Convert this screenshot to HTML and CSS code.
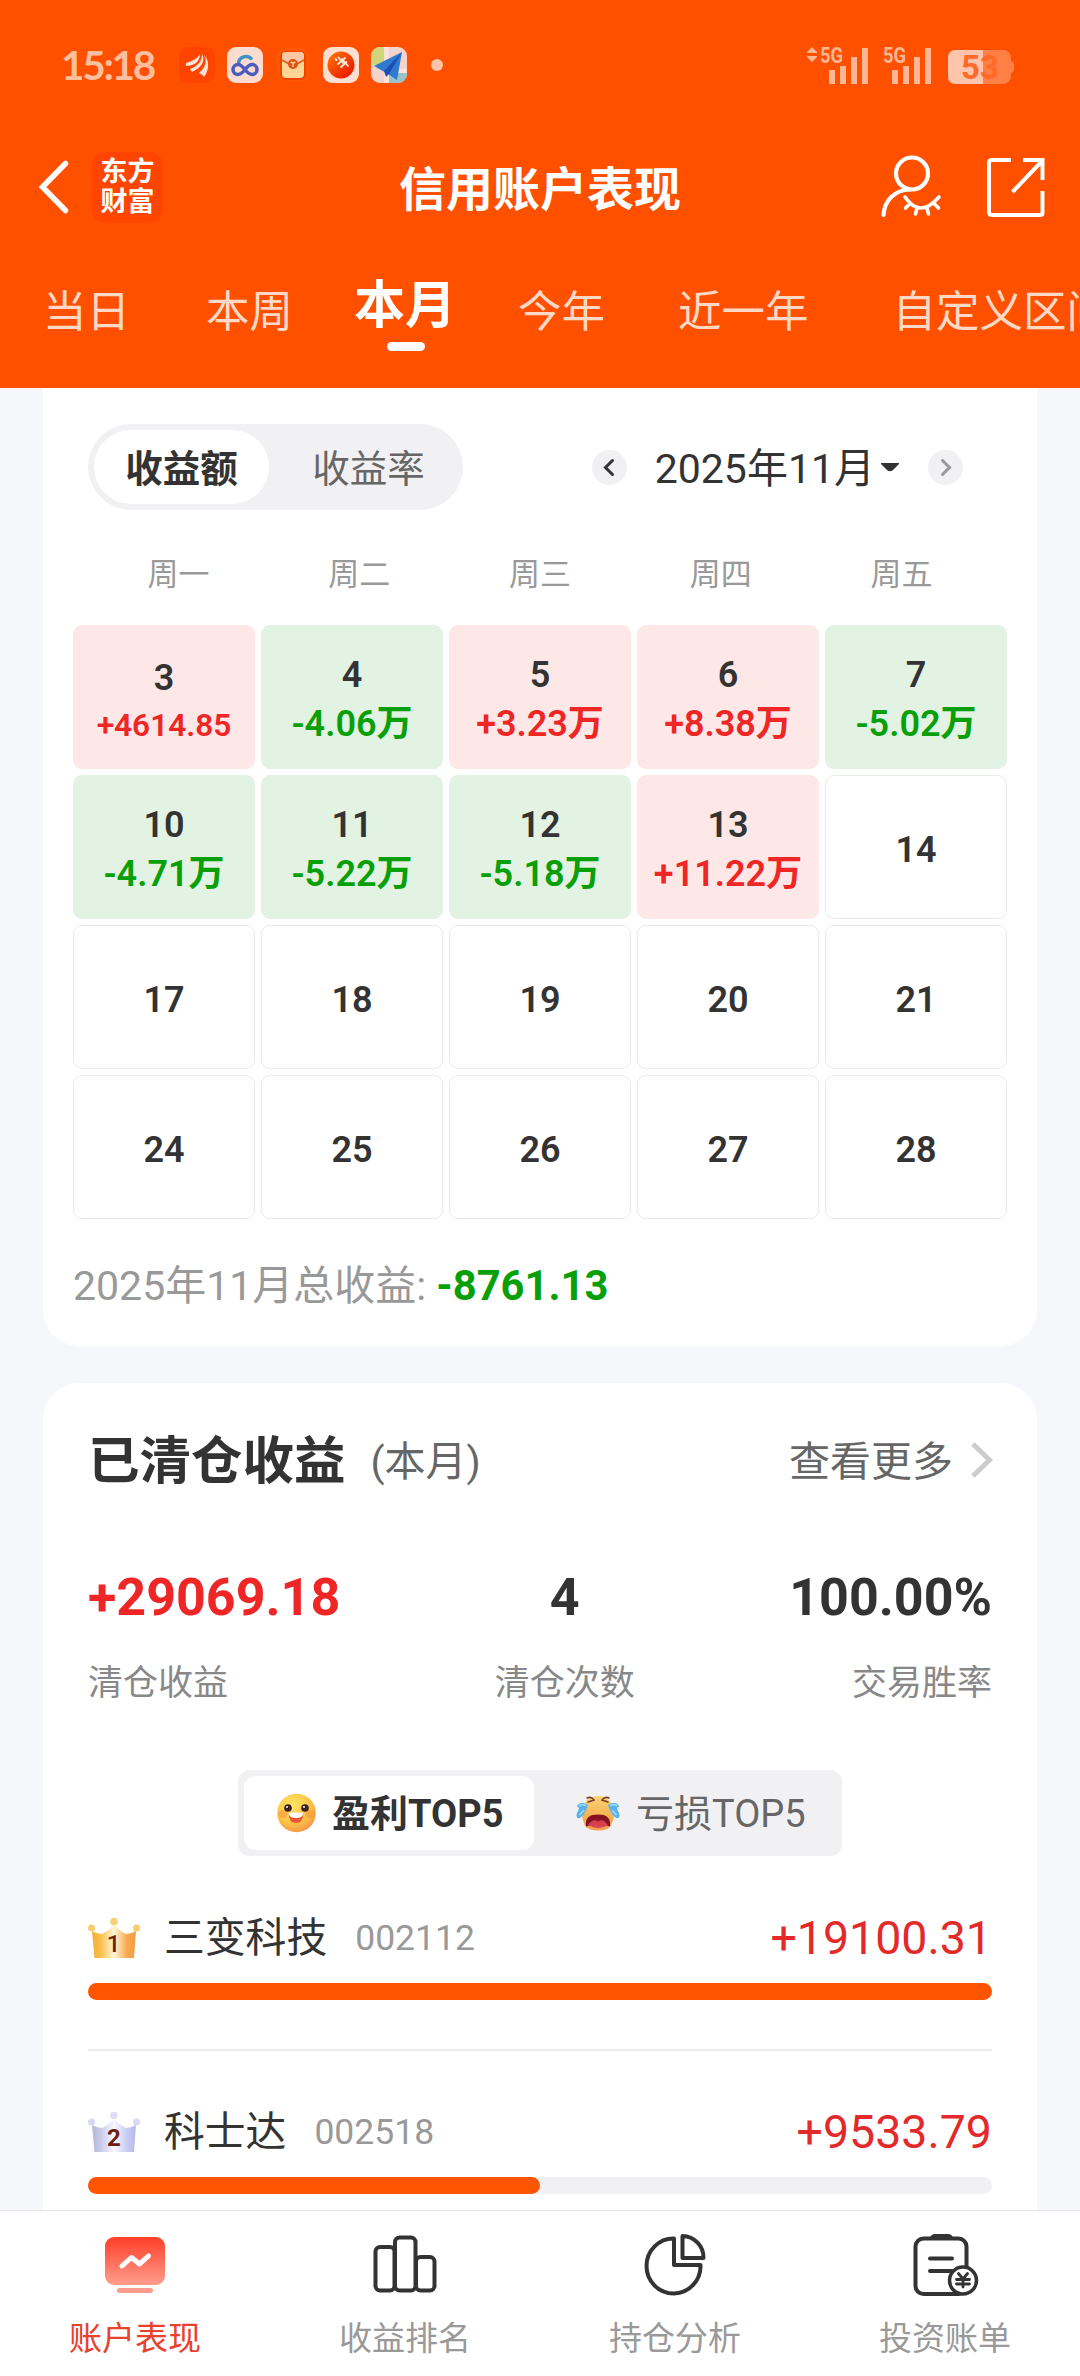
FILE: index.html
```html
<!DOCTYPE html>
<html lang="zh-CN">
<head>
  <meta charset="UTF-8">
  <meta name="viewport" content="width=device-width, initial-scale=1.0">
  <title>信用账户表现</title>
  <link rel="stylesheet" href="styles.css">
</head>
<body>
  <header class="header">
    <!-- 状态栏 -->
    <div class="status">
      <span class="status-time">15:18</span>
      <div class="status-apps">
        <svg width="36" height="36" viewBox="0 0 36 36">
          <rect width="36" height="36" rx="9" fill="#ff4400"/>
          <path d="M7 16C13 14 18 12 21 7C21 14 16 19 7 19ZM11 22C19 19 23 14 23 7C27 14 22 21 13 25ZM20 26C27 20 28 14 25 8C31 13 30 24 25 30C24 28 22 27 20 26Z" fill="#ffe3d6"/>
        </svg>
        <svg width="36" height="36" viewBox="0 0 36 36">
          <rect width="36" height="36" rx="9" fill="#fbdccf"/>
          <path d="M11.500 17A7.500 7.500 0 0 1 25 12.500" fill="none" stroke="#3f93c8" stroke-width="3.500"/>
          <path d="M25 17.500C19 17.500 17 27.500 11 27.500A5 5 0 0 1 11 17.500C14 17.500 16 20 18 22.500S22 27.500 25 27.500A5 5 0 0 0 25 17.500" fill="none" stroke="#4b5dbd" stroke-width="3.500"/>
        </svg>
        <svg width="36" height="36" viewBox="0 0 36 36">
          <rect x="1" y="1" width="34" height="34" rx="9" fill="#ff5600"/>
          <rect x="5" y="4" width="26" height="29" rx="6" fill="#f04300"/>
          <rect x="7" y="5" width="22" height="26" rx="4" fill="#ffd596"/>
          <path d="M7 9V13L14 17H22L29 13V9Q29 5 25 5H11Q7 5 7 9Z" fill="#fbc7a2"/>
          <path d="M7 13L14 17M22 17L29 13" stroke="#df5a1c" stroke-width="1.500"/>
          <circle cx="18" cy="17" r="5" fill="#df5018"/>
          <path d="M15.500 15.500H20.500M18 15.500V20" stroke="#ffd09a" stroke-width="1.500"/>
        </svg>
        <svg width="36" height="36" viewBox="0 0 36 36">
          <defs><linearGradient id="ball" x1="0" y1="0" x2="1" y2="1"><stop offset="0" stop-color="#ff7a00"/><stop offset="1" stop-color="#e90a00"/></linearGradient></defs>
          <rect width="36" height="36" rx="9" fill="#ffdfd2"/>
          <circle cx="18" cy="18" r="13.500" fill="url(#ball)"/>
          <path d="M12.500 12L13.500 13M15.500 10.500L20 16M15 17L22 11M18 20L23.500 15M19 12L25 19" stroke="#ffe8d8" stroke-width="1.800" stroke-linecap="round"/>
        </svg>
        <svg width="36" height="36" viewBox="0 0 36 36">
          <defs><clipPath id="mapclip"><rect width="36" height="36" rx="9"/></clipPath></defs>
          <g clip-path="url(#mapclip)">
            <rect width="36" height="36" fill="#f3d3cd"/>
            <rect width="13" height="18" fill="#cfd578"/>
            <rect x="18" y="26" width="18" height="10" fill="#97c3cd"/>
            <path d="M13 0H18V36H13ZM13 22H36V26H13Z" fill="#fbe3da"/>
          </g>
          <path d="M3 19L31 5L26 33L17 27Z" fill="#2f7bd0"/>
          <path d="M31 5L13 24L15 30L18 27Z" fill="#1c4fb4"/>
        </svg>
        <i class="status-dot"></i>
      </div>
      <svg class="status-signal" width="210" height="40" viewBox="0 0 210 40">
        <g fill="#ffb697">
          <path d="M7 2L12 7V8H2V7ZM2 11H12V12L7 17L2 12Z"/>
          <text x="15" y="17.500" class="net" textLength="23" lengthAdjust="spacingAndGlyphs">5G</text>
          <path d="M24 25h6v14h-6zM35 21h6v18h-6zM46 12h6v27h-6zM57 3h6v36h-6z"/>
          <text x="78" y="17.500" class="net" textLength="23" lengthAdjust="spacingAndGlyphs">5G</text>
          <path d="M87 25h6v14h-6zM98 21h6v18h-6zM109 12h6v27h-6zM120 3h6v36h-6z"/>
        </g>
        <rect x="143" y="5" width="63" height="34" rx="8" fill="#ff8045"/>
        <path d="M206 16Q209 17 209 19V25Q209 27 206 28Z" fill="#ff8045"/>
        <path d="M178 5V39H151Q143 39 143 31V13Q143 5 151 5Z" fill="#ffc4ab"/>
        <text x="156" y="33.500" class="battery">53</text>
      </svg>
    </div>

    <!-- 导航栏 -->
    <div class="nav">
      <svg class="nav-back" width="30" height="54" viewBox="0 0 30 54">
        <path d="M26.500 3.500L3.500 27L26.500 50.500" fill="none" stroke="#fff" stroke-width="5.500" stroke-linecap="round"/>
      </svg>
      <div class="logo"><span>东方</span><span>财富</span></div>
      <h1 class="nav-title">信用账户表现</h1>
      <svg class="nav-user" width="64" height="66" viewBox="0 0 64 66" fill="none" stroke="#fff" stroke-width="4.200" stroke-linecap="round">
        <circle cx="33" cy="19.500" r="16"/>
        <path d="M4.500 61C5.500 46 16 36 31 35.500"/>
        <path d="M26 43Q41 65 60 43M30.500 50L26.500 54M38 54L36.500 60M48 54L49.500 60M55.500 50L59.500 54" stroke-width="3.600"/>
      </svg>
      <svg class="nav-share" width="58" height="60" viewBox="0 0 58 60" fill="none" stroke="#fff" stroke-width="4">
        <path d="M24 3H5Q2 3 2 6V55Q2 58 5 58H53Q55.500 58 55.500 56V34M36 3H55.500V23M55 4L25.500 35"/>
      </svg>
    </div>

    <nav class="tabs">
      <a class="tab">当日</a>
      <a class="tab">本周</a>
      <a class="tab active">本月</a>
      <a class="tab">今年</a>
      <a class="tab">近一年</a>
      <a class="tab">自定义区间</a>
    </nav>
  </header>

  <main class="main">
    <!-- 收益日历 -->
    <section class="card calendar">
      <div class="toolbar">
        <div class="segment">
          <span class="segment-item active">收益额</span>
          <span class="segment-item">收益率</span>
        </div>
        <div class="month">
          <svg width="35" height="35" viewBox="0 0 35 35">
            <circle cx="17.500" cy="17.500" r="17.500" fill="#f1f1f3"/>
            <path d="M20.500 10.500L13.500 17.500L20.500 24.500" fill="none" stroke="#333" stroke-width="3" stroke-linecap="round"/>
          </svg>
          <span class="month-text">2025年11月</span>
          <svg class="caret" width="20" height="10" viewBox="0 0 20 10"><path d="M1 1H19V2L12.500 8.500Q10 10 7.500 8.500L1 2Z" fill="#333"/></svg>
          <svg width="35" height="35" viewBox="0 0 35 35">
            <circle cx="17.500" cy="17.500" r="17.500" fill="#f1f1f3"/>
            <path d="M14.500 10.500L21.500 17.500L14.500 24.500" fill="none" stroke="#999" stroke-width="3" stroke-linecap="round"/>
          </svg>
        </div>
      </div>
      <div class="week">
        <span>周一</span><span>周二</span><span>周三</span><span>周四</span><span>周五</span>
      </div>
      <div class="days">
        <div class="day up small"><b>3</b><em>+4614.85</em></div>
        <div class="day down"><b>4</b><em>-4.06万</em></div>
        <div class="day up"><b>5</b><em>+3.23万</em></div>
        <div class="day up"><b>6</b><em>+8.38万</em></div>
        <div class="day down"><b>7</b><em>-5.02万</em></div>
        <div class="day down"><b>10</b><em>-4.71万</em></div>
        <div class="day down"><b>11</b><em>-5.22万</em></div>
        <div class="day down"><b>12</b><em>-5.18万</em></div>
        <div class="day up"><b>13</b><em>+11.22万</em></div>
        <div class="day"><b>14</b></div>
        <div class="day"><b>17</b></div>
        <div class="day"><b>18</b></div>
        <div class="day"><b>19</b></div>
        <div class="day"><b>20</b></div>
        <div class="day"><b>21</b></div>
        <div class="day"><b>24</b></div>
        <div class="day"><b>25</b></div>
        <div class="day"><b>26</b></div>
        <div class="day"><b>27</b></div>
        <div class="day"><b>28</b></div>
      </div>
      <p class="total">2025年11月总收益: <strong>-8761.13</strong></p>
    </section>

    <!-- 已清仓收益 -->
    <section class="card closed">
      <div class="closed-head">
        <h2>已清仓收益</h2>
        <span class="period">(本月)</span>
        <a class="more">查看更多</a>
        <svg class="more-arrow" width="22" height="36" viewBox="0 0 22 36"><path d="M2 2L18.500 18L2 34" fill="none" stroke="#ccc" stroke-width="5"/></svg>
      </div>
      <div class="stats">
        <div class="stat"><b class="red">+29069.18</b><span>清仓收益</span></div>
        <div class="stat center"><b>4</b><span>清仓次数</span></div>
        <div class="stat right"><b>100.00%</b><span>交易胜率</span></div>
      </div>
      <div class="switch">
        <div class="switch-item active">
          <svg width="39" height="40" viewBox="0 0 39 40">
            <defs>
              <radialGradient id="smile" cx=".4" cy=".3" r=".75"><stop offset="0" stop-color="#ffe565"/><stop offset=".6" stop-color="#fcc544"/><stop offset="1" stop-color="#f3924c"/></radialGradient>
            </defs>
            <circle cx="19.500" cy="20" r="19.300" fill="url(#smile)"/>
            <ellipse cx="6" cy="21" rx="5" ry="4" fill="#f7973f" opacity=".6"/>
            <ellipse cx="33" cy="21" rx="5" ry="4" fill="#f7973f" opacity=".6"/>
            <circle cx="11" cy="15" r="3.800" fill="#3a1f24"/><circle cx="28" cy="15" r="3.800" fill="#3a1f24"/>
            <circle cx="10" cy="14" r="1" fill="#fff"/><circle cx="27" cy="14" r="1" fill="#fff"/>
            <path d="M11.500 20Q19 19 26.500 20Q26 30 19 30Q12 30 11.500 20Z" fill="#ee5636"/>
            <path d="M11.500 20Q19 18.500 26.500 20Q26 25 19 25Q12 25 11.500 20Z" fill="#fff"/>
          </svg>
          <span>盈利TOP5</span>
        </div>
        <div class="switch-item">
          <svg width="44" height="36" viewBox="0 0 44 36">
            <defs>
              <linearGradient id="cry" x1="0" y1="0" x2="0" y2="1"><stop offset="0" stop-color="#fbd475"/><stop offset=".6" stop-color="#f5b051"/><stop offset="1" stop-color="#f39a51"/></linearGradient>
            </defs>
            <path d="M22 1C32 1 38 9 38 19C38 24 36 27 35 31Q31 35.500 22 35.500T9 31C8 27 6 24 6 19C6 9 12 1 22 1Z" fill="url(#cry)"/>
            <path d="M10 31.500C9 22 14 19.500 22 19.500S35 22 34 31.500Q28 29 22 29T10 31.500Z" fill="#84121f"/>
            <path d="M12 30Q17 23 22 26.500Q27 23 32 30Q22 36 12 30Z" fill="#d8404f"/>
            <path d="M11 3Q15 1 18 5L12 7M33 3Q29 1 26 5L32 7" fill="none" stroke="#7c3d2a" stroke-width="1.600" stroke-linecap="round"/>
            <path d="M12 10C6 6 1 9 1 12C6 12 0 17 0.500 21C2 27 9 20 12 10ZM32 10C38 6 43 9 43 12C38 12 44 17 43.500 21C42 27 35 20 32 10Z" fill="#55b4ef"/>
            <path d="M10 10.500Q5 9 3 11M34 10.500Q39 9 41 11M8 15L3.500 20M36 15L40.500 20" fill="none" stroke="#a2dcfb" stroke-width="1.500"/>
          </svg>
          <span>亏损TOP5</span>
        </div>
      </div>

      <div class="rank">
        <div class="rank-row">
          <svg width="52" height="42" viewBox="0 0 52 42">
            <defs><linearGradient id="gold"><stop offset="0" stop-color="#f3af36"/><stop offset=".2" stop-color="#fbc04c"/><stop offset=".5" stop-color="#fff6d8"/><stop offset=".8" stop-color="#f8a94d"/><stop offset="1" stop-color="#f39a48"/></linearGradient></defs>
            <path d="M4 14Q9 17 14 17Q21 14 26 7Q31 14 38 17Q43 17 48 14L46 41H6.500Z" fill="url(#gold)"/>
            <circle cx="3.500" cy="11" r="3.500" fill="#f9cd6d"/><circle cx="26" cy="4.500" r="3.800" fill="#f7d17a"/><circle cx="48.500" cy="11" r="3.500" fill="#f9cd6d"/>
            <text x="25.500" y="34.500" class="crown-num thin">1</text>
          </svg>
          <span class="name">三变科技</span>
          <span class="code">002112</span>
          <span class="gain">+19100.31</span>
        </div>
        <div class="bar"><i style="width: 100%"></i></div>
      </div>
      <div class="rank">
        <div class="rank-row">
          <svg width="52" height="42" viewBox="0 0 52 42">
            <defs><linearGradient id="silver"><stop offset="0" stop-color="#b3b5d9"/><stop offset=".2" stop-color="#c8caea"/><stop offset=".5" stop-color="#f8f8ff"/><stop offset=".8" stop-color="#c9ccf3"/><stop offset="1" stop-color="#b5b9e6"/></linearGradient></defs>
            <path d="M4 14Q9 17 14 17Q21 14 26 7Q31 14 38 17Q43 17 48 14L46 41H6.500Z" fill="url(#silver)"/>
            <circle cx="3.500" cy="11" r="3.500" fill="#d5d9f6"/><circle cx="26" cy="4.500" r="3.800" fill="#dcdff6"/><circle cx="48.500" cy="11" r="3.500" fill="#d5d9f6"/>
            <text x="26" y="34.500" class="crown-num">2</text>
          </svg>
          <span class="name">科士达</span>
          <span class="code">002518</span>
          <span class="gain">+9533.79</span>
        </div>
        <div class="bar"><i style="width: 50%"></i></div>
      </div>
    </section>
  </main>

  <!-- 底部菜单 -->
  <footer class="menu">
    <a class="menu-item active">
      <svg width="66" height="66" viewBox="0 0 66 66">
        <defs><linearGradient id="screen" x1="0" y1="0" x2="0" y2="1"><stop offset="0" stop-color="#ff3f28"/><stop offset="1" stop-color="#ff9d8e"/></linearGradient></defs>
        <rect x="3" y="5" width="60" height="48" rx="9" fill="url(#screen)"/>
        <rect x="15" y="56" width="36" height="5" rx="2.500" fill="#ff9c8d"/>
        <path d="M20 34L29.500 25.500L37.500 32L46.500 24" fill="none" stroke="#fff" stroke-width="5" stroke-linecap="round" stroke-linejoin="round"/>
      </svg>
      <span>账户表现</span>
    </a>
    <a class="menu-item">
      <svg width="66" height="66" viewBox="0 0 66 66" fill="none" stroke="#333" stroke-width="4">
        <rect x="3.500" y="15" width="19" height="43.500" rx="4.500"/>
        <rect x="23" y="5.500" width="20.500" height="53" rx="4.500"/>
        <rect x="44" y="25" width="18.500" height="33.500" rx="4.500"/>
      </svg>
      <span>收益排名</span>
    </a>
    <a class="menu-item">
      <svg width="66" height="66" viewBox="0 0 66 66" fill="none" stroke="#333" stroke-width="4" stroke-linejoin="round">
        <path d="M32 6.500A27 27.500 0 1 0 58.500 33H32Z"/>
        <path d="M40.500 4A21.500 21.500 0 0 1 61.500 26H40.500Z"/>
      </svg>
      <span>持仓分析</span>
    </a>
    <a class="menu-item">
      <svg width="66" height="66" viewBox="0 0 66 66" fill="none" stroke="#333" stroke-width="4" stroke-linecap="round">
        <rect x="3.500" y="6.500" width="51" height="55.500" rx="8"/>
        <path d="M18 6Q19 2 23 2H36Q40 2 41 6Z" fill="#333" stroke="none"/>
        <path d="M18 26.500H40M18 39H40"/>
        <circle cx="51" cy="48.500" r="13.500" fill="#fff" stroke-width="3.500"/>
        <path d="M46.500 41.500L51 47L55.500 41.500M51 47V55M44.500 47.500H57.500M44.500 52H57.500" stroke-width="2.800"/>
      </svg>
      <span>投资账单</span>
    </a>
  </footer>
</body>
</html>
```
FILE: styles.css
```css
* {
  box-sizing: border-box;
}
html,
body {
  margin: 0;
  width: 100%;
  height: 100%;
}
body {
  display: flex;
  flex-direction: column;
  height: 2376px;
  overflow: hidden;
  background: #f6f7fa;
  color: #333;
  font-family: Roboto, "Noto Sans CJK SC", sans-serif;
}
svg {
  display: block;
  flex: none;
  overflow: visible;
}
h1, h2, p {
  margin: 0;
}
em, i {
  font-style: normal;
}

/* 头部 */
.header {
  flex: none;
  height: 388px;
  background: #ff5000;
  color: #fff;
  overflow: hidden;
}
.status {
  display: flex;
  align-items: center;
  height: 130px;
  padding: 0 65px 0 61px;
}
.status-time {
  width: 118px;
  font: 700 40.500px/50px Lato, sans-serif;
  letter-spacing: -2.300px;
  color: #ffbf9f;
}
.status-apps {
  display: flex;
  align-items: center;
  gap: 12px;
}
.status-dot {
  width: 12px;
  height: 12px;
  margin-left: 12px;
  border-radius: 50%;
  background: #ffc4a8;
}
.status-signal {
  margin-left: auto;
}
.net {
  font-size: 22px;
  font-weight: 700;
}
.battery {
  font-size: 33px;
  font-weight: 700;
  fill: #ff6a28;
}

.nav {
  display: flex;
  align-items: center;
  height: 114px;
  padding: 0 35px 0 39px;
}
.logo {
  display: flex;
  flex-direction: column;
  justify-content: center;
  width: 71px;
  height: 71px;
  margin-left: 23px;
  border-radius: 14px;
  background: #ff4500;
  text-align: center;
  font-size: 27px;
  font-weight: 700;
  line-height: 30px;
}
.nav-title {
  margin: 5px auto 0 236px;
  font-size: 47px;
  font-weight: 700;
  line-height: 60px;
}
.nav-share {
  margin-left: 44px;
}

.tabs {
  display: flex;
  align-items: center;
  height: 144px;
  padding: 0 0 6px 43px;
  white-space: nowrap;
}
.tab {
  flex: none;
  margin-right: 76px;
  font-size: 43.500px;
  line-height: 60px;
  color: #ffd9c6;
}
.tab:nth-child(2) {
  margin-right: 61px;
}
.tab:nth-child(4) {
  margin-right: 73px;
}
.tab:nth-child(5) {
  margin-right: 84px;
}
.tab.active {
  position: relative;
  margin-right: 62px;
  padding-bottom: 14px;
  font-size: 51px;
  font-weight: 700;
  color: #fff;
}
.tab.active::after {
  content: "";
  position: absolute;
  left: 50%;
  bottom: -1px;
  width: 38px;
  height: 9px;
  margin-left: -18px;
  border-radius: 5px;
  background: #fff;
}

/* 内容 */
.main {
  flex: 1;
  min-height: 0;
  padding: 0 43px;
  overflow: hidden;
}
.card {
  background: #fff;
}
.calendar {
  height: 958px;
  padding: 36px 30px 0;
  border-radius: 0 0 36px 36px;
}
.toolbar {
  display: flex;
  justify-content: space-between;
  align-items: center;
  height: 86px;
  padding: 0 44px 0 15px;
}
.segment {
  display: flex;
  padding: 6px;
  width: 375px;
  height: 86px;
  border-radius: 43px;
  background: #f1f1f3;
}
.segment-item {
  width: 175px;
  border-radius: 37px;
  text-align: center;
  font-size: 37.500px;
  line-height: 79px;
  color: #666;
}
.segment-item + .segment-item {
  margin-left: 12px;
}
.segment-item.active {
  background: #fff;
  font-weight: 700;
  color: #333;
}
.month {
  display: flex;
  align-items: center;
}
.month-text {
  margin: 4px 5px 0 28px;
  font-size: 41px;
  line-height: 60px;
}
.caret {
  margin-right: 28px;
}
.week {
  display: grid;
  grid-template-columns: repeat(5, 1fr);
  height: 115px;
  padding: 15px 15px 0;
  text-align: center;
  font-size: 31px;
  line-height: 99px;
  color: #999;
}
.days {
  display: grid;
  grid-template-columns: repeat(5, 182px);
  grid-auto-rows: 144px;
  gap: 6px;
}
.day {
  display: flex;
  flex-direction: column;
  align-items: center;
  justify-content: center;
  padding-top: 6px;
  border: 1px solid #ebebeb;
  border-radius: 9px;
  font-size: 36px;
  line-height: 49px;
}
.day b,
.day em {
  font-weight: 600;
}
.day.up {
  border-color: #fde8e7;
  background: #fde8e7;
}
.day.down {
  border-color: #e3f3e3;
  background: #e3f3e3;
}
.up em,
.red {
  color: #ee2626;
}
.down em {
  color: #089f08;
}
.day.small {
  padding-top: 7px;
}
.small em {
  font-size: 31.600px;
  line-height: 45px;
}
.total {
  padding-top: 3px;
  font-size: 41px;
  line-height: 127px;
  color: #999;
}
.total strong {
  font-size: 41.700px;
  font-weight: 700;
  color: #089f08;
}

.closed {
  height: 900px;
  margin-top: 37px;
  padding: 0 45px;
  border-radius: 36px 36px 0 0;
}
.closed-head {
  display: flex;
  align-items: center;
  height: 158px;
}
.closed-head h2 {
  font-size: 51.500px;
  line-height: 70px;
}
.period,
.more {
  font-size: 41px;
  line-height: 60px;
  color: #666;
}
.period {
  margin-left: 25px;
}
.more {
  margin-left: auto;
}
.more-arrow {
  margin: -4px -1px 0 18px;
}
.stats {
  display: flex;
  justify-content: space-between;
  padding-top: 27px;
}
.stat {
  display: flex;
  flex-direction: column;
}
.stat.center {
  align-items: center;
}
.stat.right {
  align-items: flex-end;
}
.stat b {
  font-size: 52px;
  line-height: 60px;
}
.stat span {
  margin-top: 36px;
  font-size: 35px;
  line-height: 40px;
  color: #888;
}
.switch {
  display: flex;
  width: 604px;
  height: 86px;
  margin: 66px auto 1px;
  padding: 6px;
  border-radius: 12px;
  background: #f1f1f3;
}
.switch-item {
  display: flex;
  align-items: center;
  width: 290px;
  padding-left: 33px;
  border-radius: 12px;
  font-size: 38px;
  line-height: 50px;
  color: #666;
}
.switch-item span {
  margin: 2px 0 0 16px;
  white-space: nowrap;
}
.switch-item + .switch-item {
  padding-left: 42px;
}
.switch-item.active {
  background: #fff;
  font-weight: 700;
  color: #333;
}
.rank {
  padding: 53px 0 49px;
  border-bottom: 2px solid #eee;
}
.rank-row {
  display: flex;
  align-items: center;
  height: 56px;
  margin-bottom: 17px;
  line-height: 56px;
}
.name {
  margin-left: 24px;
  font-size: 40.800px;
}
.code {
  margin-left: 28px;
  font-size: 35.500px;
  color: #999;
}
.gain {
  margin-left: auto;
  font-size: 46.500px;
  color: #e32929;
}
.crown-num {
  font-size: 24px;
  font-weight: 700;
  text-anchor: middle;
  fill: #6b2112;
}
.crown-num.thin {
  font-weight: 500;
}
.bar {
  height: 17px;
  border-radius: 9px;
  background: #f1f1f3;
}
.bar i {
  display: block;
  height: 100%;
  border-radius: 9px;
  background: #ff5500;
}

/* 底部 */
.menu {
  display: flex;
  flex: none;
  height: 166px;
  border-top: 1px solid #e8e8ea;
  background: #fff;
}
.menu-item {
  display: flex;
  flex: 1;
  flex-direction: column;
  align-items: center;
  padding-top: 21px;
  font-size: 33px;
  line-height: 40px;
  color: #999;
}
.menu-item span {
  margin-top: 21px;
}
.menu-item.active {
  color: #e8412c;
}
```
